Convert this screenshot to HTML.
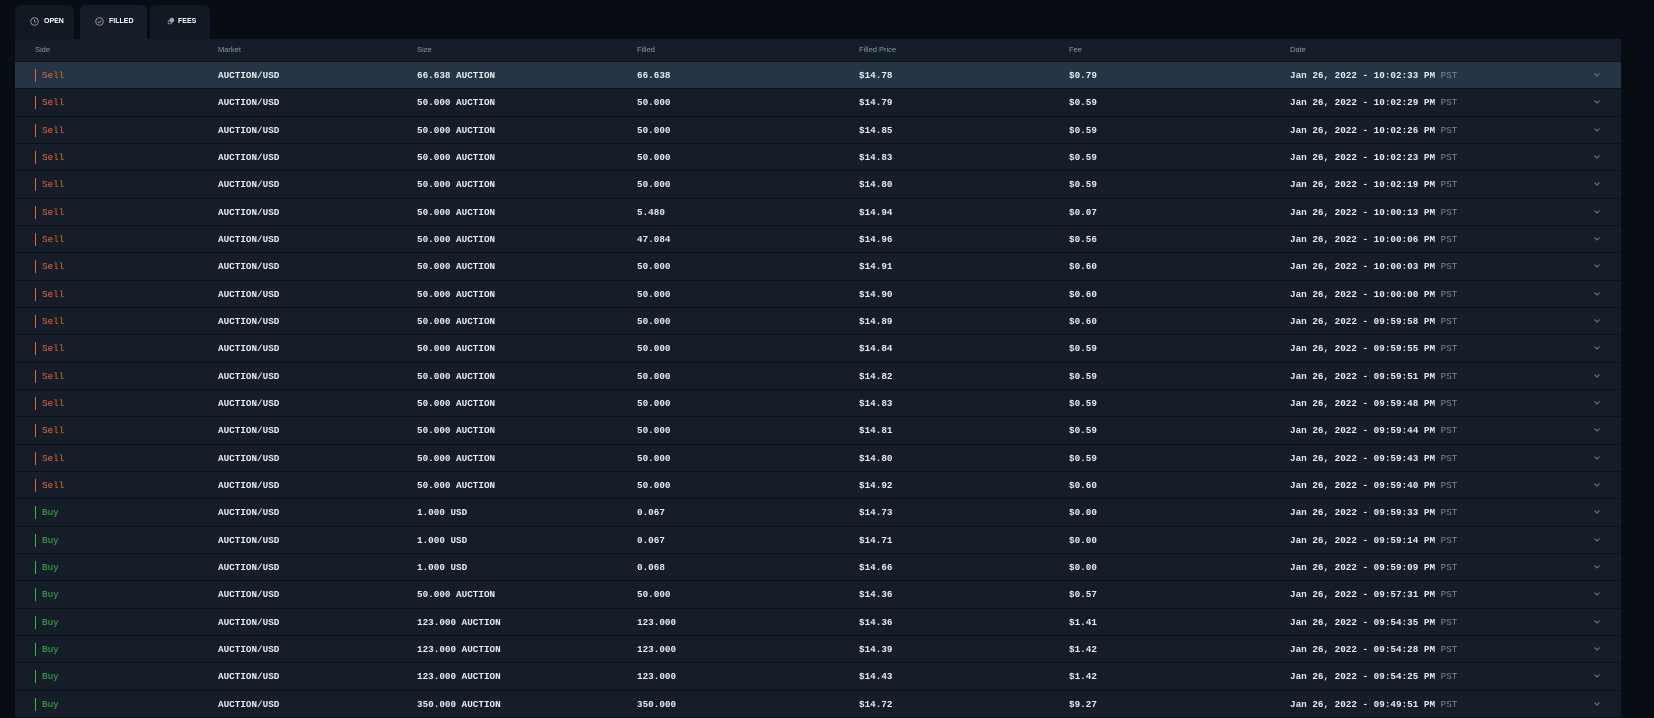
<!DOCTYPE html>
<html><head><meta charset="utf-8"><style>
*{margin:0;padding:0;box-sizing:border-box}
body{width:1654px;height:718px;overflow:hidden;background:#080d13;font-family:"Liberation Mono",monospace;}
.tabs{position:absolute;top:5px;left:15px;height:34px}
.tab{position:absolute;top:0;height:34px;background:#111a23;border-radius:6px 6px 0 0;color:#fff;font-family:"Liberation Sans",sans-serif;font-weight:bold;font-size:7px;line-height:34px}
.tab.act{background:#161f29}
.tab svg{position:absolute;top:12px}
.tbl{position:absolute;top:39px;left:15px;width:1606px;background:#151e28}
.hd{height:23px;position:relative;font-family:"Liberation Sans",sans-serif;font-size:7.5px;color:#8a97a6;border-bottom:1px solid #0b1117}
.hd span{position:absolute;top:6px}
.r{height:27.33px;position:relative;border-bottom:1px solid #0b1117;font-size:9.3px;font-weight:bold;color:#e8ecf0}
.r.sel{background:#263545}
.r span{position:absolute;top:8px;white-space:pre}
.c0{left:20px}.c1{left:203px}.c2{left:402px}.c3{left:622px}.c4{left:844px}.c5{left:1054px}.c6{left:1275px}
.r span.s,.r span.b{display:block;font-weight:normal;padding-left:6px;height:13px;line-height:14px;top:7px}
.r span.s{color:#e8652e;border-left:1px solid #e8652e}
.r span.b{color:#3ab54a;border-left:1px solid #3ab54a}
.p{color:#7e8893;font-weight:normal;font-style:normal}
.ch{position:absolute;left:1579px;top:11px}
</style></head><body>
<div class="tabs">
<div class="tab" style="left:0;width:59px"><svg style="left:15px" width="9" height="9" viewBox="0 0 10 10"><circle cx="5" cy="5" r="4.2" fill="none" stroke="#9aa5b1" stroke-width="0.9"/><path d="M5 2.5V5l1.6 1.2" fill="none" stroke="#9aa5b1" stroke-width="0.9"/></svg><span style="position:absolute;left:29px">OPEN</span></div>
<div class="tab act" style="left:65px;width:67px"><svg style="left:15px" width="9" height="9" viewBox="0 0 10 10"><circle cx="5" cy="5" r="4.2" fill="none" stroke="#9aa5b1" stroke-width="0.9"/><path d="M3 5.2l1.5 1.3L7 3.8" fill="none" stroke="#9aa5b1" stroke-width="0.9"/></svg><span style="position:absolute;left:29px">FILLED</span></div>
<div class="tab" style="left:135px;width:60px"><svg style="left:17px" width="8" height="8" viewBox="0 0 10 10"><circle cx="6" cy="4" r="3" fill="#9aa5b1"/><circle cx="3.5" cy="6.5" r="2.2" fill="none" stroke="#9aa5b1"/></svg><span style="position:absolute;left:28px">FEES</span></div>
</div>
<div class="tbl">
<div class="hd"><span class="c0">Side</span><span class="c1">Market</span><span class="c2">Size</span><span class="c3">Filled</span><span class="c4">Filled Price</span><span class="c5">Fee</span><span class="c6">Date</span></div>
<div class="r sel"><span class="c0 s">Sell</span><span class="c1">AUCTION/USD</span><span class="c2">66.638 AUCTION</span><span class="c3">66.638</span><span class="c4">$14.78</span><span class="c5">$0.79</span><span class="c6">Jan 26, 2022 - 10:02:33 PM <i class="p">PST</i></span><svg class="ch" width="6" height="4" viewBox="0 0 6 4"><path d="M0.5 0.5L3 3 5.5 0.5" fill="none" stroke="#6c7885"/></svg></div>
<div class="r"><span class="c0 s">Sell</span><span class="c1">AUCTION/USD</span><span class="c2">50.000 AUCTION</span><span class="c3">50.000</span><span class="c4">$14.79</span><span class="c5">$0.59</span><span class="c6">Jan 26, 2022 - 10:02:29 PM <i class="p">PST</i></span><svg class="ch" width="6" height="4" viewBox="0 0 6 4"><path d="M0.5 0.5L3 3 5.5 0.5" fill="none" stroke="#6c7885"/></svg></div>
<div class="r"><span class="c0 s">Sell</span><span class="c1">AUCTION/USD</span><span class="c2">50.000 AUCTION</span><span class="c3">50.000</span><span class="c4">$14.85</span><span class="c5">$0.59</span><span class="c6">Jan 26, 2022 - 10:02:26 PM <i class="p">PST</i></span><svg class="ch" width="6" height="4" viewBox="0 0 6 4"><path d="M0.5 0.5L3 3 5.5 0.5" fill="none" stroke="#6c7885"/></svg></div>
<div class="r"><span class="c0 s">Sell</span><span class="c1">AUCTION/USD</span><span class="c2">50.000 AUCTION</span><span class="c3">50.000</span><span class="c4">$14.83</span><span class="c5">$0.59</span><span class="c6">Jan 26, 2022 - 10:02:23 PM <i class="p">PST</i></span><svg class="ch" width="6" height="4" viewBox="0 0 6 4"><path d="M0.5 0.5L3 3 5.5 0.5" fill="none" stroke="#6c7885"/></svg></div>
<div class="r"><span class="c0 s">Sell</span><span class="c1">AUCTION/USD</span><span class="c2">50.000 AUCTION</span><span class="c3">50.000</span><span class="c4">$14.80</span><span class="c5">$0.59</span><span class="c6">Jan 26, 2022 - 10:02:19 PM <i class="p">PST</i></span><svg class="ch" width="6" height="4" viewBox="0 0 6 4"><path d="M0.5 0.5L3 3 5.5 0.5" fill="none" stroke="#6c7885"/></svg></div>
<div class="r"><span class="c0 s">Sell</span><span class="c1">AUCTION/USD</span><span class="c2">50.000 AUCTION</span><span class="c3">5.480</span><span class="c4">$14.94</span><span class="c5">$0.07</span><span class="c6">Jan 26, 2022 - 10:00:13 PM <i class="p">PST</i></span><svg class="ch" width="6" height="4" viewBox="0 0 6 4"><path d="M0.5 0.5L3 3 5.5 0.5" fill="none" stroke="#6c7885"/></svg></div>
<div class="r"><span class="c0 s">Sell</span><span class="c1">AUCTION/USD</span><span class="c2">50.000 AUCTION</span><span class="c3">47.084</span><span class="c4">$14.96</span><span class="c5">$0.56</span><span class="c6">Jan 26, 2022 - 10:00:06 PM <i class="p">PST</i></span><svg class="ch" width="6" height="4" viewBox="0 0 6 4"><path d="M0.5 0.5L3 3 5.5 0.5" fill="none" stroke="#6c7885"/></svg></div>
<div class="r"><span class="c0 s">Sell</span><span class="c1">AUCTION/USD</span><span class="c2">50.000 AUCTION</span><span class="c3">50.000</span><span class="c4">$14.91</span><span class="c5">$0.60</span><span class="c6">Jan 26, 2022 - 10:00:03 PM <i class="p">PST</i></span><svg class="ch" width="6" height="4" viewBox="0 0 6 4"><path d="M0.5 0.5L3 3 5.5 0.5" fill="none" stroke="#6c7885"/></svg></div>
<div class="r"><span class="c0 s">Sell</span><span class="c1">AUCTION/USD</span><span class="c2">50.000 AUCTION</span><span class="c3">50.000</span><span class="c4">$14.90</span><span class="c5">$0.60</span><span class="c6">Jan 26, 2022 - 10:00:00 PM <i class="p">PST</i></span><svg class="ch" width="6" height="4" viewBox="0 0 6 4"><path d="M0.5 0.5L3 3 5.5 0.5" fill="none" stroke="#6c7885"/></svg></div>
<div class="r"><span class="c0 s">Sell</span><span class="c1">AUCTION/USD</span><span class="c2">50.000 AUCTION</span><span class="c3">50.000</span><span class="c4">$14.89</span><span class="c5">$0.60</span><span class="c6">Jan 26, 2022 - 09:59:58 PM <i class="p">PST</i></span><svg class="ch" width="6" height="4" viewBox="0 0 6 4"><path d="M0.5 0.5L3 3 5.5 0.5" fill="none" stroke="#6c7885"/></svg></div>
<div class="r"><span class="c0 s">Sell</span><span class="c1">AUCTION/USD</span><span class="c2">50.000 AUCTION</span><span class="c3">50.000</span><span class="c4">$14.84</span><span class="c5">$0.59</span><span class="c6">Jan 26, 2022 - 09:59:55 PM <i class="p">PST</i></span><svg class="ch" width="6" height="4" viewBox="0 0 6 4"><path d="M0.5 0.5L3 3 5.5 0.5" fill="none" stroke="#6c7885"/></svg></div>
<div class="r"><span class="c0 s">Sell</span><span class="c1">AUCTION/USD</span><span class="c2">50.000 AUCTION</span><span class="c3">50.000</span><span class="c4">$14.82</span><span class="c5">$0.59</span><span class="c6">Jan 26, 2022 - 09:59:51 PM <i class="p">PST</i></span><svg class="ch" width="6" height="4" viewBox="0 0 6 4"><path d="M0.5 0.5L3 3 5.5 0.5" fill="none" stroke="#6c7885"/></svg></div>
<div class="r"><span class="c0 s">Sell</span><span class="c1">AUCTION/USD</span><span class="c2">50.000 AUCTION</span><span class="c3">50.000</span><span class="c4">$14.83</span><span class="c5">$0.59</span><span class="c6">Jan 26, 2022 - 09:59:48 PM <i class="p">PST</i></span><svg class="ch" width="6" height="4" viewBox="0 0 6 4"><path d="M0.5 0.5L3 3 5.5 0.5" fill="none" stroke="#6c7885"/></svg></div>
<div class="r"><span class="c0 s">Sell</span><span class="c1">AUCTION/USD</span><span class="c2">50.000 AUCTION</span><span class="c3">50.000</span><span class="c4">$14.81</span><span class="c5">$0.59</span><span class="c6">Jan 26, 2022 - 09:59:44 PM <i class="p">PST</i></span><svg class="ch" width="6" height="4" viewBox="0 0 6 4"><path d="M0.5 0.5L3 3 5.5 0.5" fill="none" stroke="#6c7885"/></svg></div>
<div class="r"><span class="c0 s">Sell</span><span class="c1">AUCTION/USD</span><span class="c2">50.000 AUCTION</span><span class="c3">50.000</span><span class="c4">$14.80</span><span class="c5">$0.59</span><span class="c6">Jan 26, 2022 - 09:59:43 PM <i class="p">PST</i></span><svg class="ch" width="6" height="4" viewBox="0 0 6 4"><path d="M0.5 0.5L3 3 5.5 0.5" fill="none" stroke="#6c7885"/></svg></div>
<div class="r"><span class="c0 s">Sell</span><span class="c1">AUCTION/USD</span><span class="c2">50.000 AUCTION</span><span class="c3">50.000</span><span class="c4">$14.92</span><span class="c5">$0.60</span><span class="c6">Jan 26, 2022 - 09:59:40 PM <i class="p">PST</i></span><svg class="ch" width="6" height="4" viewBox="0 0 6 4"><path d="M0.5 0.5L3 3 5.5 0.5" fill="none" stroke="#6c7885"/></svg></div>
<div class="r"><span class="c0 b">Buy</span><span class="c1">AUCTION/USD</span><span class="c2">1.000 USD</span><span class="c3">0.067</span><span class="c4">$14.73</span><span class="c5">$0.00</span><span class="c6">Jan 26, 2022 - 09:59:33 PM <i class="p">PST</i></span><svg class="ch" width="6" height="4" viewBox="0 0 6 4"><path d="M0.5 0.5L3 3 5.5 0.5" fill="none" stroke="#6c7885"/></svg></div>
<div class="r"><span class="c0 b">Buy</span><span class="c1">AUCTION/USD</span><span class="c2">1.000 USD</span><span class="c3">0.067</span><span class="c4">$14.71</span><span class="c5">$0.00</span><span class="c6">Jan 26, 2022 - 09:59:14 PM <i class="p">PST</i></span><svg class="ch" width="6" height="4" viewBox="0 0 6 4"><path d="M0.5 0.5L3 3 5.5 0.5" fill="none" stroke="#6c7885"/></svg></div>
<div class="r"><span class="c0 b">Buy</span><span class="c1">AUCTION/USD</span><span class="c2">1.000 USD</span><span class="c3">0.068</span><span class="c4">$14.66</span><span class="c5">$0.00</span><span class="c6">Jan 26, 2022 - 09:59:09 PM <i class="p">PST</i></span><svg class="ch" width="6" height="4" viewBox="0 0 6 4"><path d="M0.5 0.5L3 3 5.5 0.5" fill="none" stroke="#6c7885"/></svg></div>
<div class="r"><span class="c0 b">Buy</span><span class="c1">AUCTION/USD</span><span class="c2">50.000 AUCTION</span><span class="c3">50.000</span><span class="c4">$14.36</span><span class="c5">$0.57</span><span class="c6">Jan 26, 2022 - 09:57:31 PM <i class="p">PST</i></span><svg class="ch" width="6" height="4" viewBox="0 0 6 4"><path d="M0.5 0.5L3 3 5.5 0.5" fill="none" stroke="#6c7885"/></svg></div>
<div class="r"><span class="c0 b">Buy</span><span class="c1">AUCTION/USD</span><span class="c2">123.000 AUCTION</span><span class="c3">123.000</span><span class="c4">$14.36</span><span class="c5">$1.41</span><span class="c6">Jan 26, 2022 - 09:54:35 PM <i class="p">PST</i></span><svg class="ch" width="6" height="4" viewBox="0 0 6 4"><path d="M0.5 0.5L3 3 5.5 0.5" fill="none" stroke="#6c7885"/></svg></div>
<div class="r"><span class="c0 b">Buy</span><span class="c1">AUCTION/USD</span><span class="c2">123.000 AUCTION</span><span class="c3">123.000</span><span class="c4">$14.39</span><span class="c5">$1.42</span><span class="c6">Jan 26, 2022 - 09:54:28 PM <i class="p">PST</i></span><svg class="ch" width="6" height="4" viewBox="0 0 6 4"><path d="M0.5 0.5L3 3 5.5 0.5" fill="none" stroke="#6c7885"/></svg></div>
<div class="r"><span class="c0 b">Buy</span><span class="c1">AUCTION/USD</span><span class="c2">123.000 AUCTION</span><span class="c3">123.000</span><span class="c4">$14.43</span><span class="c5">$1.42</span><span class="c6">Jan 26, 2022 - 09:54:25 PM <i class="p">PST</i></span><svg class="ch" width="6" height="4" viewBox="0 0 6 4"><path d="M0.5 0.5L3 3 5.5 0.5" fill="none" stroke="#6c7885"/></svg></div>
<div class="r"><span class="c0 b">Buy</span><span class="c1">AUCTION/USD</span><span class="c2">350.000 AUCTION</span><span class="c3">350.000</span><span class="c4">$14.72</span><span class="c5">$9.27</span><span class="c6">Jan 26, 2022 - 09:49:51 PM <i class="p">PST</i></span><svg class="ch" width="6" height="4" viewBox="0 0 6 4"><path d="M0.5 0.5L3 3 5.5 0.5" fill="none" stroke="#6c7885"/></svg></div>
</div>
</body></html>
